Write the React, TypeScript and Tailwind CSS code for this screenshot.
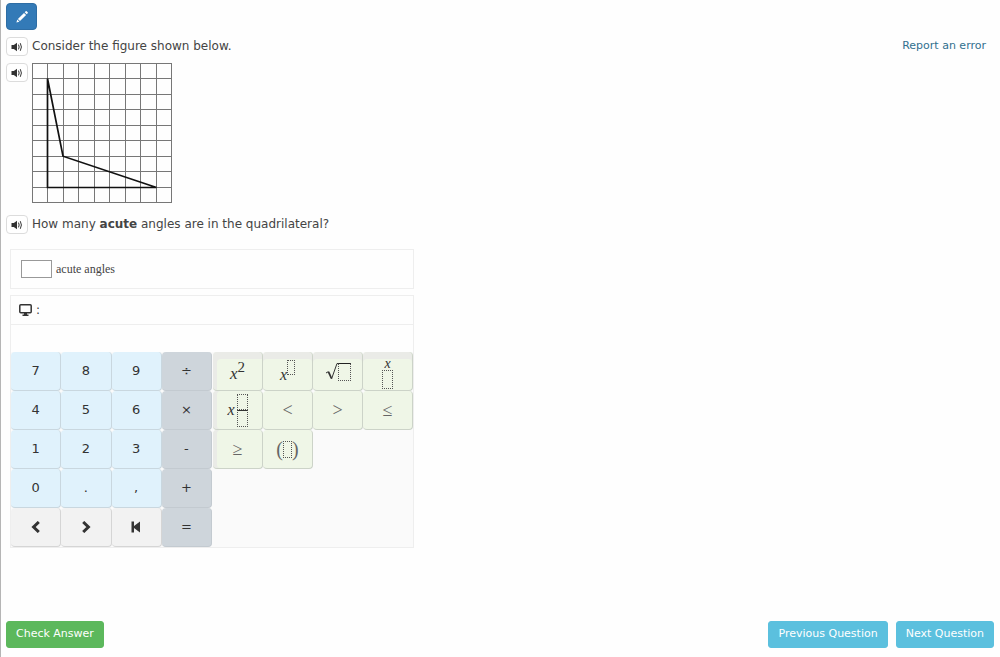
import React, { useState } from "react";

function SpeakerButton({ label }: { label: string }) {
  return (
    <button
      type="button"
      aria-label={label}
      className="flex h-[19px] w-[22px] shrink-0 items-center justify-center rounded-[4px] border border-[#dcdcdc] bg-white text-[#333]"
    >
      <svg width="12" height="10" viewBox="0 0 12 10" aria-hidden="true">
        <path d="M0.5 3h2.3L6 0.8v8.4L2.8 7H0.5z" fill="currentColor" />
        <path d="M7.5 2.6q1.3 2.4 0 4.8M9.3 1.2q2.2 3.8 0 7.6" fill="none" stroke="currentColor" strokeWidth="1" />
      </svg>
    </button>
  );
}

function GridFigure() {
  const lines = [0, 1, 2, 3, 4, 5, 6, 7, 8, 9].map((n) => Math.round(n * 15.45) + 0.5);
  return (
    <svg width="140" height="140" viewBox="0 0 140 140" role="img" aria-label="Quadrilateral on a grid">
      {lines.map((p) => (
        <path key={p} d={`M${p} 0V140M0 ${p}H140`} stroke="#777" strokeWidth="1" fill="none" />
      ))}
      <path d="M15.5 15.5L31 93.2L124.5 124.5H15.5Z" fill="none" stroke="#111" strokeWidth="1.7" />
    </svg>
  );
}

function PreviousIcon() {
  return (
    <svg width="10" height="12" viewBox="0 0 10 12" aria-hidden="true">
      <path d="M7.8 1L2.6 6l5.2 5" fill="none" stroke="currentColor" strokeWidth="3" />
    </svg>
  );
}

function NextIcon() {
  return (
    <svg width="10" height="12" viewBox="0 0 10 12" aria-hidden="true">
      <path d="M2.2 1L7.4 6l-5.2 5" fill="none" stroke="currentColor" strokeWidth="3" />
    </svg>
  );
}

function BackspaceIcon() {
  return (
    <svg width="10" height="12" viewBox="0 0 10 12" aria-hidden="true">
      <path d="M0.5 0.5H3V5L9 0.5v11L3 7v4.5H0.5z" fill="currentColor" />
    </svg>
  );
}

type Key = { name: string; face: React.ReactNode };

const text = (face: string, name = face): Key => ({ name, face });

const numberRows: Key[][] = [
  [text("7"), text("8"), text("9"), text("÷", "divide")],
  [text("4"), text("5"), text("6"), text("×", "times")],
  [text("1"), text("2"), text("3"), text("-", "minus")],
  [text("0"), text(".", "point"), text(",", "comma"), text("+", "plus")],
  [
    { name: "move left", face: <PreviousIcon /> },
    { name: "move right", face: <NextIcon /> },
    { name: "delete", face: <BackspaceIcon /> },
    text("=", "equals"),
  ],
];

function keyColour(row: number, column: number) {
  if (column === 3) return "border-[#c3cad0] bg-[#ced5db]";
  if (row === 4) return "border-[#d5d5d5] bg-[#f2f2f2]";
  return "border-[#c9d7df] bg-[#e0f2fc]";
}

const slot = "block border border-dotted border-[#555]";

const mathKeys: Key[] = [
  {
    name: "squared",
    face: (
      <span className="flex items-center text-[#333]">
        <i className="pt-1 text-[17px]">x</i>
        <span className="pb-2 text-[15px]">2</span>
      </span>
    ),
  },
  {
    name: "power",
    face: (
      <span className="flex items-center text-[#333]">
        <i className="pt-2 text-[16px]">x</i>
        <span className="pb-2">
          <span className={`${slot} h-[15px] w-2`} />
        </span>
      </span>
    ),
  },
  {
    name: "square root",
    face: (
      <span className="flex items-end">
        <svg width="13" height="19" viewBox="0 0 13 19" aria-hidden="true">
          <path d="M1 11l2.5-1.5" fill="none" stroke="#333" strokeWidth="1" />
          <path d="M3.5 9.8L6.5 16.5" fill="none" stroke="#333" strokeWidth="1.8" />
          <path d="M6.5 17L12 1.5h1" fill="none" stroke="#333" strokeWidth="1" />
        </svg>
        <span className="block h-[18px] w-[13px] border border-dotted border-[#555] border-t-[#222] [border-top-style:solid]" />
      </span>
    ),
  },
  {
    name: "fraction",
    face: (
      <span className="flex flex-col items-center pt-1 text-[#333]">
        <i className="text-[14px] leading-[12px]">x</i>
        <span className={`${slot} h-[19px] w-[11px]`} />
      </span>
    ),
  },
  {
    name: "mixed number",
    face: (
      <span className="flex items-center gap-[2px] text-[#333]">
        <i className="text-[16px]">x</i>
        <span className="block">
          <span className={`${slot} h-4 w-[11px]`} />
          <span className="block h-[17px] w-[11px] border border-dotted border-[#555] border-t-[#333] [border-top-style:solid]" />
        </span>
      </span>
    ),
  },
  text("<", "less than"),
  text(">", "greater than"),
  text("≤", "less than or equal"),
  text("≥", "greater than or equal"),
  {
    name: "parentheses",
    face: (
      <span className="flex items-center text-[20px]">
        (
        <span className={`${slot} h-[17px] w-[9px]`} />)
      </span>
    ),
  },
];

function mathKeyShade(index: number) {
  if (index === 0) return "shadow-[inset_4px_7px_0_#eaebe7]";
  if (index < 4) return "shadow-[inset_0_7px_0_#eaebe7]";
  if (index % 4 === 0) return "shadow-[inset_4px_0_0_#eaebe7]";
  return "";
}

function Keypad({ onKey }: { onKey: (name: string) => void }) {
  return (
    <div className="grid grid-cols-2 bg-[#fafafa]">
      <div className="grid grid-cols-4 auto-rows-[39px]">
        {numberRows.map((row, r) =>
          row.map((key, c) => (
            <button
              key={key.name}
              type="button"
              aria-label={key.name}
              onClick={() => onKey(key.name)}
              className={`flex items-center justify-center rounded-[4px] border-r border-b text-[13px] text-[#333] ${keyColour(r, c)}`}
            >
              {key.face}
            </button>
          )),
        )}
      </div>
      <div className="grid grid-cols-4 auto-rows-[39px] content-start pl-px font-['Liberation_Serif',serif]">
        {mathKeys.map((key, i) => (
          <button
            key={key.name}
            type="button"
            aria-label={key.name}
            onClick={() => onKey(key.name)}
            className={`flex items-center justify-center rounded-[4px] border-r border-b border-[#ccd3c8] bg-[#eff6e7] text-[18px] leading-none text-[#666] ${mathKeyShade(i)}`}
          >
            {key.face}
          </button>
        ))}
      </div>
    </div>
  );
}

const action = "h-[27px] rounded-[3px] border px-[9px] text-[11px] text-white";

export default function App() {
  const [answer, setAnswer] = useState("");
  const press = (name: string) => {
    if (/^\d$/.test(name)) setAnswer((value) => value + name);
    if (name === "delete") setAnswer((value) => value.slice(0, -1));
  };

  return (
    <div className="flex min-h-screen flex-col border-l border-[#b5b5b5] bg-[#fefefe] font-['DejaVu_Sans',sans-serif] text-[12px] text-[#444]">
      <header className="px-[5px] pt-[3px]">
        <button
          type="button"
          aria-label="Scratchpad"
          className="flex h-[27px] w-[31px] items-center justify-center rounded-[4px] border border-[#2e6da4] bg-[#337ab7] text-white"
        >
          <svg width="12" height="12" viewBox="0 0 12 12" fill="currentColor" aria-hidden="true">
            <path d="M8.7 1.2l1-1q.5-.3 1 .1l1 1q.4.5 0 1l-1 1zM8 1.9l2.1 2.1L4 10.1 1.9 8zM1.3 8.6l2.1 2.1L.4 11.6z" />
          </svg>
        </button>
      </header>

      <main className="grow px-[5px] pt-[7px]">
        <div className="flex items-center gap-1">
          <SpeakerButton label="Read the introduction" />
          <p className="grow leading-[19px]">Consider the figure shown below.</p>
          <a href="#report" className="pr-[9px] text-[11px] text-[#31708f]">
            Report an error
          </a>
        </div>

        <div className="mt-[7px] flex items-start gap-1">
          <SpeakerButton label="Read the figure" />
          <GridFigure />
        </div>

        <div className="mt-3 flex items-center gap-1">
          <SpeakerButton label="Read the question" />
          <p className="leading-[19px]">
            How many <b>acute</b> angles are in the quadrilateral?
          </p>
        </div>

        <section className="mx-1 mt-[15px] max-w-[404px]">
          <label className="flex h-10 items-center gap-1 border border-[#eee] px-[10px] font-['Liberation_Serif',serif]">
            <input
              value={answer}
              onChange={(event) => setAnswer(event.target.value)}
              className="h-[18px] w-[31px] border border-[#999] bg-white px-1 outline-none"
            />
            acute angles
          </label>

          <div className="mt-[6px] border border-[#eee]">
            <div className="flex h-[29px] items-center gap-1 border-b border-[#eee] px-2">
              <svg width="13" height="12" viewBox="0 0 13 12" aria-hidden="true">
                <rect x="0.8" y="0.8" width="11.4" height="7.9" rx="1" fill="none" stroke="#333" strokeWidth="1.5" />
                <path d="M5 9h3v1.4h1.5V12h-6v-1.6H5z" fill="#333" />
              </svg>
              :
            </div>
            <div className="h-[27px]" />
            <Keypad onKey={press} />
          </div>
        </section>
      </main>

      <footer className="flex items-center gap-2 pr-[6px] pb-[9px] pl-[5px]">
        <button type="button" className={`${action} mr-auto border-[#5cb85c] bg-[#5cb85c]`}>
          Check Answer
        </button>
        <button type="button" className={`${action} border-[#5bc0de] bg-[#5bc0de]`}>
          Previous Question
        </button>
        <button type="button" className={`${action} border-[#5bc0de] bg-[#5bc0de]`}>
          Next Question
        </button>
      </footer>
    </div>
  );
}
